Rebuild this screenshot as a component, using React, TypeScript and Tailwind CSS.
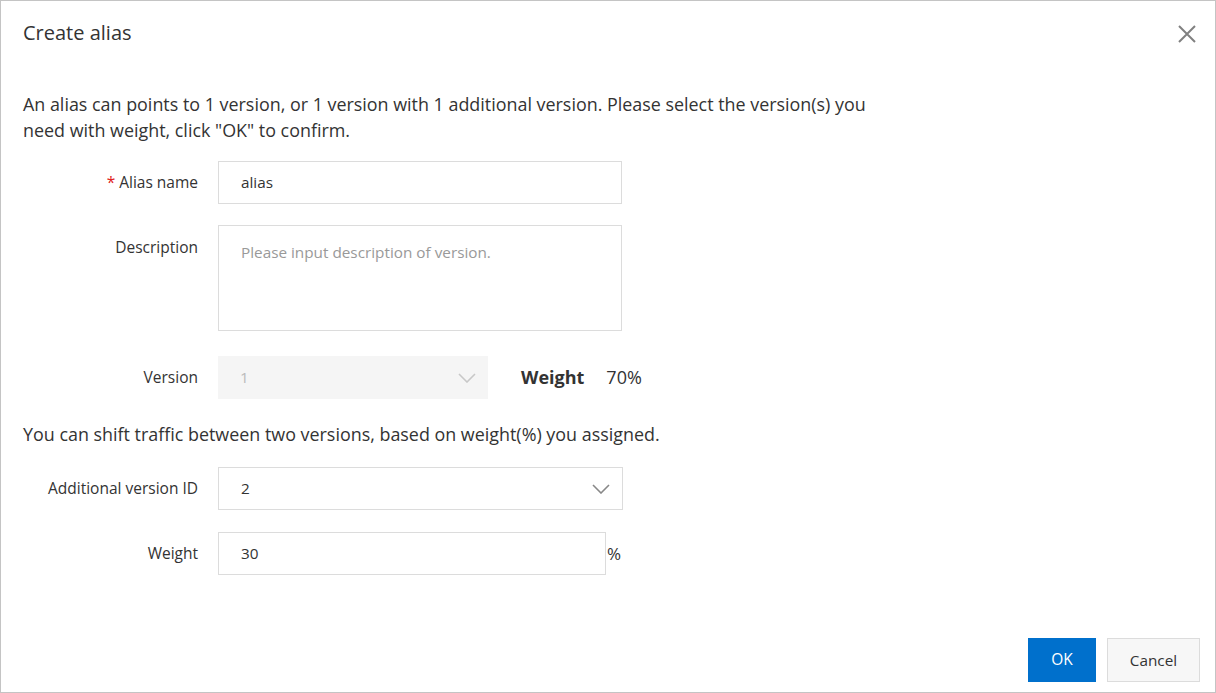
import React from "react";

const Chevron = ({ className }: { className?: string }) => (
  <svg width="18" height="10" viewBox="0 0 18 10" className={className} fill="none">
    <path d="M1 1l8 8 8-8" stroke="currentColor" strokeWidth="1.6" />
  </svg>
);

export default function App() {
  return (
    <div
      className="w-[1216px] h-[693px] border border-[#c4c4c4] bg-white text-[#333] flex flex-col relative"
      style={{ fontFamily: '"Open Sans", "Noto Sans", Arial, sans-serif' }}
    >
      <div className="flex items-center justify-between pl-[22px] pr-[16px] h-[66px]">
        <div className="text-[20px] text-[#333] -mt-[3px]">Create alias</div>
        <button className="w-[24px] h-[24px] flex items-center justify-center text-[#808080]">
          <svg width="20" height="20" viewBox="0 0 20 20" fill="none">
            <path d="M2 2l16 16M18 2L2 18" stroke="currentColor" strokeWidth="2" />
          </svg>
        </button>
      </div>
      <div className="px-[22px] pt-[24px] flex-1">
        <p className="text-[17.9px] leading-[26px] w-[870px]">
          An alias can points to 1 version, or 1 version with 1 additional version. Please select the version(s) you need with weight, click "OK" to confirm.
        </p>
        <div className="mt-[18px] flex items-center">
          <div className="w-[175px] text-right text-[15.5px]">
            <span className="text-[#e02020] mr-[4px]">*</span>Alias name
          </div>
          <div className="ml-[20px] w-[404px] h-[43px] border border-[#dcdcdc] flex items-center pl-[22px] text-[15.3px]">
            alias
          </div>
        </div>
        <div className="mt-[21px] flex items-start">
          <div className="w-[175px] text-right text-[15.5px] pt-[11px]">Description</div>
          <div className="ml-[20px] w-[404px] h-[106px] border border-[#dcdcdc] pl-[22px] pt-[15px] text-[15.3px] text-[#999]">
            Please input description of version.
          </div>
        </div>
        <div className="mt-[25px] flex items-center">
          <div className="w-[175px] text-right text-[15.5px]">Version</div>
          <div className="ml-[20px] w-[270px] h-[43px] bg-[#f5f5f5] flex items-center justify-between pl-[22px] pr-[12px] text-[15.3px] text-[#bbb]">
            <span>1</span>
            <Chevron className="text-[#c8c8c8]" />
          </div>
          <div className="ml-[33px] text-[18px] font-bold text-[#333]">Weight</div>
          <div className="ml-[22px] text-[18px]">70%</div>
        </div>
        <p className="mt-[22px] text-[17.9px] leading-[26px]">
          You can shift traffic between two versions, based on weight(%) you assigned.
        </p>
        <div className="mt-[20px] flex items-center">
          <div className="w-[175px] text-right text-[15.5px]">Additional version ID</div>
          <div className="ml-[20px] w-[405px] h-[43px] border border-[#dcdcdc] flex items-center justify-between pl-[22px] pr-[12px] text-[15.3px]">
            <span>2</span>
            <Chevron className="text-[#888]" />
          </div>
        </div>
        <div className="mt-[22px] flex items-center">
          <div className="w-[175px] text-right text-[15.5px]">Weight</div>
          <div className="ml-[20px] w-[388px] h-[43px] border border-[#dcdcdc] flex items-center pl-[22px] text-[15.3px]">
            30
          </div>
          <div className="ml-[1px] text-[17px]">%</div>
        </div>
      </div>
      <div className="flex justify-end gap-[11px] pr-[15px] pb-[10px]">
        <button className="w-[68px] h-[44px] bg-[#0070cc] text-white text-[15.5px]">OK</button>
        <button className="w-[93px] h-[44px] bg-[#f7f7f7] border border-[#dcdcdc] text-[#333] text-[15.3px]">Cancel</button>
      </div>
    </div>
  );
}
